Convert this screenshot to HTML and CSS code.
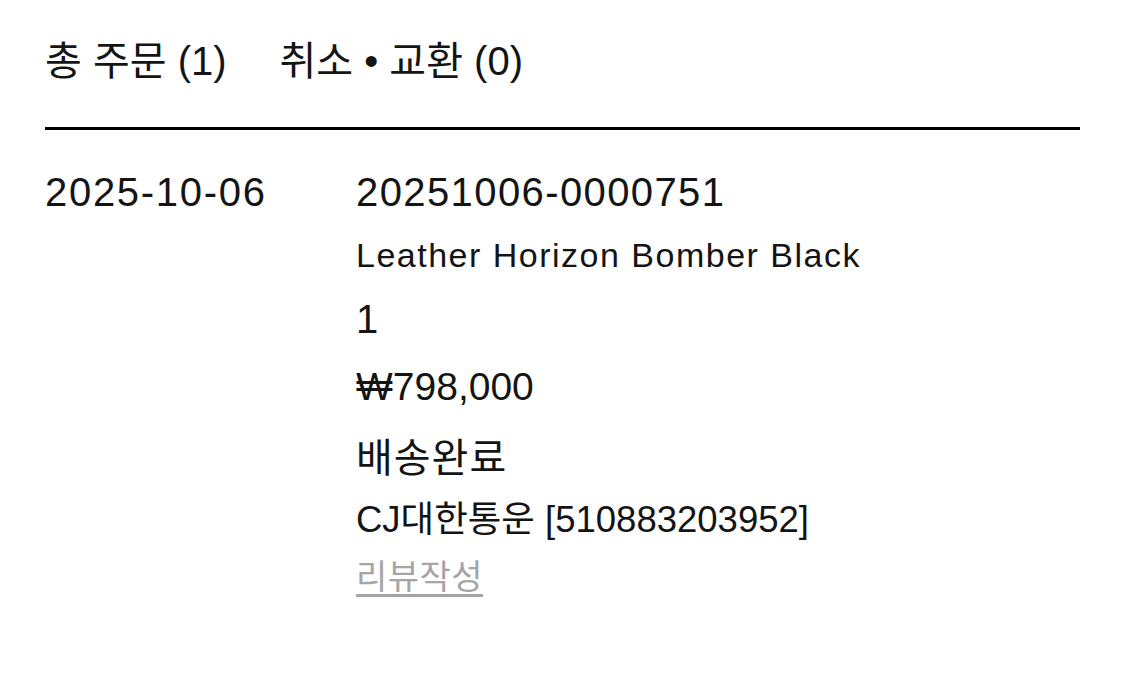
FILE: index.html
```html
<!DOCTYPE html>
<html lang="ko">
<head>
<meta charset="utf-8">
<title>주문 내역</title>
<link rel="stylesheet" href="styles.css">
</head>
<body>
<div class="page">
  <nav class="tabs">
    <span class="tab">총 주문 (1)</span>
    <span class="tab">취소 • 교환 (0)</span>
  </nav>
  <section class="order">
    <div class="order-date">2025-10-06</div>
    <div class="order-info">
      <div class="line num">20251006-0000751</div>
      <div class="line name">Leather Horizon Bomber Black</div>
      <div class="line qty">1</div>
      <div class="line price">₩798,000</div>
      <div class="line status">배송완료</div>
      <div class="line courier">CJ대한통운 [510883203952]</div>
      <a class="line review" href="#">리뷰작성</a>
    </div>
  </section>
</div>
</body>
</html>
```

FILE: styles.css
```css
html, body {
  margin: 0;
  padding: 0;
  background: #ffffff;
}
body {
  font-family: "Liberation Sans", "Noto Sans CJK KR", sans-serif;
  color: #141414;
}
.page {
  padding: 0 45px;
}
.tabs {
  display: flex;
  gap: 53px;
  height: 130px;
  padding-bottom: 6px;
  align-items: center;
  box-sizing: border-box;
  border-bottom: 3px solid #000;
  font-size: 40px;
  line-height: 1;
}
.order {
  display: flex;
  padding-top: 32px;
}
.order-date {
  width: 311px;
  flex: none;
  font-size: 40px;
  line-height: 60px;
  letter-spacing: 1.7px;
}
.order-info {
  display: flex;
  flex-direction: column;
  align-items: flex-start;
}
.line {
  font-size: 40px;
  line-height: 66px;
  letter-spacing: 1.2px;
}
.num {
  line-height: 60px;
  letter-spacing: 1.4px;
}
.name {
  font-size: 34px;
  letter-spacing: 1.5px;
}
.qty {
  line-height: 62px;
}
.price {
  font-size: 39px;
  line-height: 74px;
  letter-spacing: 0;
}
.status {
  line-height: 68px;
  letter-spacing: 1px;
}
.courier {
  font-size: 36.5px;
  line-height: 56px;
  letter-spacing: 0;
}
.review {
  font-size: 34px;
  line-height: 58px;
  color: #a5a5a5;
  letter-spacing: 0.5px;
  text-decoration: underline;
  text-underline-offset: 5px;
  text-decoration-thickness: 3px;
}
```
